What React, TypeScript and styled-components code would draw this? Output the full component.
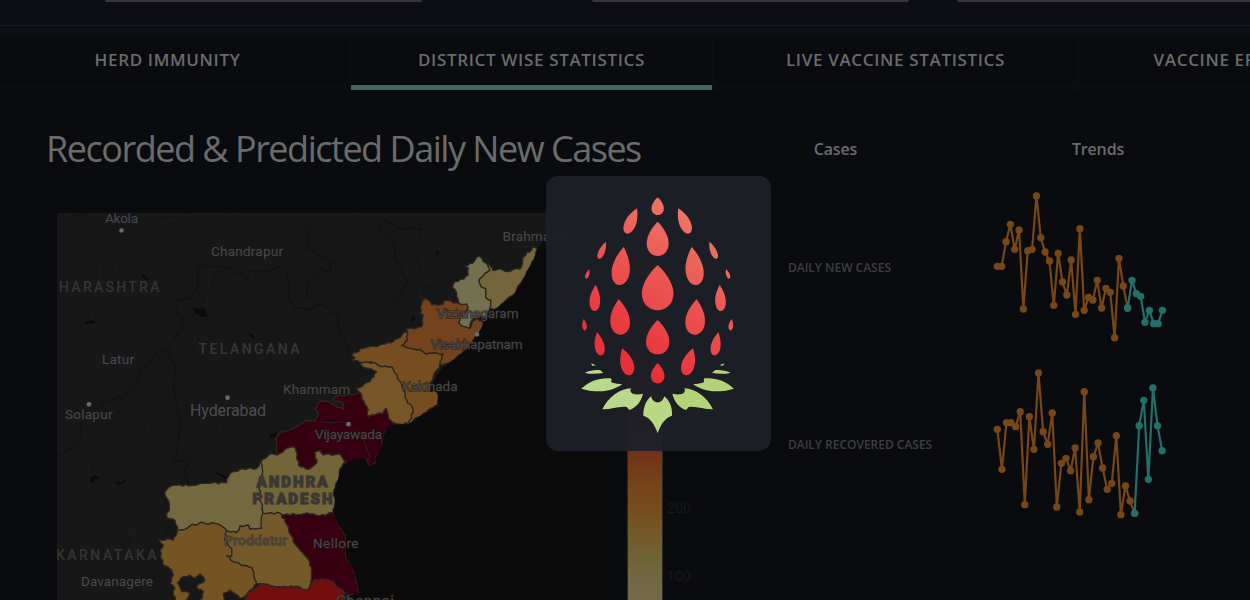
import React from "react";
import styled, { createGlobalStyle } from "styled-components";

const GlobalStyle = createGlobalStyle`
  body { margin: 0; background: #0a0b0f; overflow: hidden; }
  * { box-sizing: border-box; }
`;

const Page = styled.div`
  position: relative;
  width: 1250px;
  height: 600px;
  overflow: hidden;
  background: #0a0b0f;
  color: #6a6b6c;
  font-family: "Open Sans", "Noto Sans", sans-serif;
`;

const Header = styled.header`
  display: flex;
  height: 26px;
  padding-left: 105px;
  background: #0d0d14;
  border-bottom: 1px solid #1a1a1d;
`;

const FieldEdge = styled.div<{ $width: number; $gap: number }>`
  flex: none;
  width: ${(p) => p.$width}px;
  height: 2px;
  margin-right: ${(p) => p.$gap}px;
  background: #37373b;
  border-radius: 0 0 3px 3px;
`;

const TabBar = styled.nav`
  display: flex;
  gap: 2px;
  height: 64px;
  padding-top: 12px;
  margin-left: -14px;
  background: #0d0d14;
`;

const Tab = styled.div<{ $active?: boolean }>`
  flex: none;
  width: ${(p) => (p.$active ? 361 : 363)}px;
  height: 52px;
  padding-top: 10px;
  background: #0a0b0f;
  border-bottom: 5px solid ${(p) => (p.$active ? "#42665f" : "#0c0c14")};
  font-size: 17px;
  font-weight: 600;
  letter-spacing: 0.66px;
  line-height: 24px;
  text-align: center;
  white-space: nowrap;
`;

const Main = styled.main`
  display: flex;
  padding-left: 47px;
`;

const MapColumn = styled.section`
  flex: none;
  width: 741px;
`;

const Title = styled.h1`
  margin: 0 0 0 -1px;
  height: 123px;
  padding-top: 34px;
  font-size: 36px;
  font-weight: 400;
  line-height: 50px;
  letter-spacing: -1.48px;
  white-space: nowrap;
`;

const MapRow = styled.div`
  display: flex;
  height: 387px;
  padding-left: 10px;
`;

const MapSvg = styled.svg`
  flex: none;
  width: 549px;
  height: 387px;
  font-family: Roboto, sans-serif;
`;

const ColorScale = styled.div`
  flex: none;
  width: 36px;
  height: 387px;
  margin-left: 21px;
  border: solid #2c2a28;
  border-width: 0 1px;
  background: linear-gradient(#34000f 0, #34000f 80px, #743019 238px, #744219 268px, #75501f 303px, #715c2e 328px, #6f6335 347px, #726744 366px, #746a49 387px);
`;

const Ticks = styled.div`
  display: flex;
  flex-direction: column;
  gap: 48px;
  padding: 285px 0 0 4px;
  color: #17181b;
  font-size: 14px;
  line-height: 20px;
`;

const TrendTable = styled.section`
  flex: none;
  width: 450px;
`;

const TableHead = styled.div`
  display: flex;
  height: 89px;
  padding-top: 47px;
  font-size: 16px;
  font-weight: 600;
  letter-spacing: -0.15px;
  line-height: 24px;
`;

const HeadCell = styled.div<{ $width: number }>`
  flex: none;
  width: ${(p) => p.$width}px;
  text-align: center;
`;

const TrendRow = styled.div`
  display: flex;
  align-items: center;
  height: 177px;
`;

const TrendLabel = styled.div`
  width: 192px;
  color: #3e3e3f;
  font-size: 12px;
  font-weight: 600;
  letter-spacing: -0.01px;
  white-space: nowrap;
`;

const TrendSvg = styled.svg`
  flex: none;
  width: 200px;
  height: 177px;
`;

const LoadingCard = styled.div`
  position: absolute;
  left: 546px;
  top: 176px;
  width: 225px;
  height: 275px;
  border-radius: 12px;
  background: rgba(29, 31, 40, 0.955);
  overflow: hidden;
`;

const LogoSvg = styled.svg`
  display: block;
  width: 225px;
  height: 275px;
`;

type Point = [number, number];

const parse = (s: string, [ox, oy]: Point = [0, 0]): Point[] =>
  s.split(" ").map((p) => {
    const [x, y] = p.split(",").map(Number);
    return [x + ox, y + oy];
  });

/* Breaks a straight edge into small irregular steps, the same ones whichever way the edge is walked. */
const roughEdge = (a: Point, b: Point): Point[] => {
  const flip = a[0] > b[0] || (a[0] === b[0] && a[1] > b[1]);
  const [p, q] = flip ? [b, a] : [a, b];
  const len = Math.hypot(q[0] - p[0], q[1] - p[1]);
  const n = Math.floor(len / 8);
  const out: Point[] = [];
  for (let k = 1; k < n; k++) {
    const x = p[0] + ((q[0] - p[0]) * k) / n;
    const y = p[1] + ((q[1] - p[1]) * k) / n;
    const r = Math.sin(Math.round(x) * 12.99 + Math.round(y) * 78.2) * 2.8;
    out.push([x - ((q[1] - p[1]) / len) * r, y + ((q[0] - p[0]) / len) * r]);
  }
  return flip ? out.reverse() : out;
};

const rough = (pts: Point[], closed: boolean): string => {
  const out: Point[] = [];
  pts.forEach((p, i) => {
    out.push(p);
    if (i < pts.length - 1 || closed) out.push(...roughEdge(p, pts[(i + 1) % pts.length]));
  });
  return out.map(([x, y]) => `${x.toFixed(1)},${y.toFixed(1)}`).join(" ");
};

const districts: { at: Point; fill: string; pts: string }[] = [
  { at: [1020, 600], fill: "#754d20", pts: "35,465 70,445 110,440 160,425 200,395 203,420 185,437 210,445 240,448 258,462 280,458 310,462 300,495 280,530 270,548 270,575 285,570 295,585 293,615 250,640 207,670 220,630 200,600 185,555 165,520 155,500 130,500 100,488 35,482 45,474" },
  { at: [1020, 600], fill: "#765527", pts: "60,487 100,488 130,500 155,500 165,520 185,555 200,600 220,630 207,670 170,672 145,655 138,625 130,640 105,645 85,650 80,620 60,578 50,565 90,545 110,515 90,505 65,498" },
  { at: [1020, 600], fill: "#74431d", pts: "255,296 265,300 275,315 300,315 310,312 312,302 350,308 380,312 385,325 360,350 357,370 375,380 390,385 397,365 410,355 430,365 425,385 410,403 400,425 378,450 350,472 320,490 300,495 310,462 280,458 258,462 240,448 210,445 185,437 203,420 200,385 215,385 245,380 250,345 240,340 245,312" },
  { at: [1020, 600], fill: "#73704f", pts: "417,168 430,185 440,190 450,210 430,228 418,238 425,262 437,265 437,292 452,300 450,325 440,350 415,350 395,360 390,385 375,380 357,370 360,350 385,325 380,312 360,312 350,290 350,278 338,262 345,245 372,237 385,225 385,205 375,198 398,190 405,180" },
  { at: [1020, 600], fill: "#74653d", pts: "445,188 460,212 485,208 500,215 520,208 540,207 548,180 560,158 575,150 580,138 592,148 582,180 560,215 545,245 520,285 490,308 465,328 450,325 452,300 437,292 437,265 425,262 418,238 430,228 450,210" },
  { at: [780, 1140], fill: "#360010", pts: "300,38 320,80 325,110 345,105 370,100 378,85 385,115 410,132 380,150 370,175 365,210 345,235 350,250 325,258 318,235 290,240 260,250 255,245 240,222 190,225 180,212 165,215 170,250 145,268 115,255 108,215 100,200 80,205 52,225 47,175 60,158 100,145 135,122 165,125 175,105 165,85 180,65 200,65 215,72 250,88 250,70 218,60 225,50 260,45" },
  { at: [780, 1140], fill: "#746539", pts: "5,240 30,222 52,225 80,205 100,200 108,215 115,255 145,268 170,250 165,215 180,212 190,225 240,222 255,245 238,275 235,300 222,330 225,365 220,398 180,408 150,402 65,405 60,400 8,400 8,395 0,360 -2,295 8,275" },
  { at: [120, 1200], fill: "#746840", pts: "375,275 395,257 470,255 510,250 560,248 570,220 600,208 650,205 665,180 668,215 658,235 660,300 668,335 665,385 630,388 625,375 600,378 590,398 560,392 540,375 490,368 450,378 430,390 412,390 405,362 380,350 388,320" },
  { at: [120, 1200], fill: "#755424", pts: "355,418 400,420 412,390 430,390 450,378 490,368 540,375 560,392 555,420 575,445 575,470 560,468 580,485 635,502 642,525 650,550 625,575 610,592 600,595 570,570 550,580 555,610 480,610 490,575 470,560 495,540 480,522 465,535 450,525 430,530 412,548 425,575 450,580 430,610 410,610 400,585 405,565 390,550 400,525 395,510 368,490 360,450 370,435" },
  { at: [120, 1200], fill: "#745a2b", pts: "665,385 668,340 720,340 725,345 745,380 760,425 810,485 815,537 805,568 760,560 720,560 660,552 650,550 642,525 635,502 580,485 560,468 575,470 575,445 555,420 560,392 590,398 600,378 625,375 630,388" },
  { at: [780, 1140], fill: "#360010", pts: "65,405 150,402 180,408 220,398 232,430 258,465 258,530 285,580 298,642 270,645 240,625 220,605 200,598 165,598 145,628 155,597 150,545 100,485 85,440" },
  { at: [780, 1140], fill: "#720e0d", pts: "-55,670 -30,635 0,612 60,620 100,620 145,628 165,598 200,598 220,605 240,625 255,640 250,670" },
];

const roads = [
  "M171 705 Q260 690 330 720 T470 690 T660 640", "M171 800 L230 770 L310 790 L440 690 L520 655",
  "M250 640 C230 720 310 760 300 830 S270 900 280 980", "M310 640 L300 720 L350 790 L330 900",
  "M390 680 L500 770", "M171 860 L250 900 L350 920 L440 925 L540 915", "M456 850 C455 960 430 1020 350 1180",
  "M456 930 L500 1010 L560 1070 L660 1160", "M171 1000 L260 970 L330 1000 L456 940", "M171 1040 L280 1050 L380 1025 L500 1060",
  "M530 850 C510 740 560 690 640 700 L700 640", "M640 640 L660 740 L630 800 L620 920 L700 950 L840 920",
  "M540 1010 L640 960 L720 920 L910 920 L970 880 L1080 770", "M685 1187 L760 1090 L940 1000 L980 910",
  "M685 1187 L600 1080 L580 1000", "M685 1187 L560 1300 L500 1370 L360 1260 L250 1110", "M685 1187 L850 1170 L960 1110",
  "M171 1390 L250 1355 L380 1310 L440 1240 L520 1130", "M262 1355 L330 1440 L370 1520 L410 1630",
  "M262 1355 L270 1470 L240 1600 L190 1640", "M171 1620 L230 1600 L390 1585 L490 1605",
  "M440 1240 L450 1350 L400 1450 L450 1510 L490 1605", "M685 1187 L655 1300 L620 1340 L650 1420 L690 1440",
  "M790 1190 L900 1270 L960 1250 L1020 1190", "M1020 855 L1140 850 L1220 815 L1330 740 L1440 660",
  "M1080 640 L1110 710 L1200 810 L1270 845 L1340 840", "M1270 845 L1240 930 L1180 1000", "M1250 640 C1290 700 1260 780 1275 845",
  "M400 1585 L410 1700 L440 1800", "M171 1740 L250 1700 L330 1740 L470 1720", "M1340 840 L1420 790 L1530 760 L1650 710",
  "M560 1300 L640 1300 L720 1320 L800 1270",
];

const borders = [
  "220,640 225,648 250,648 265,640",
  "590,790 630,800 690,800 700,815 735,825 740,835 750,815 810,815 840,800 865,825 865,880 880,920 930,930 960,910 1010,945 1020,1000 1050,1060",
  "590,790 595,850 570,900 575,895 530,900 530,940 555,970 525,1010 500,1055 470,1050 450,1090 420,1110 410,1160 370,1190",
  "500,1055 525,1100 520,1150 525,1200 540,1270 530,1360 520,1380 565,1385 555,1420 565,1450",
  "905,680 925,690 920,745 970,770 1000,785 990,815 960,805 930,840 920,880 930,900",
  "1140,670 1150,700 1180,730 1190,780 1220,840 1200,890 1185,905",
  "1140,670 1160,660 1200,690 1240,685 1265,690 1260,660", "370,1190 320,1200 280,1240 245,1270 240,1330 200,1350 171,1370",
];

const places: { t: string; x: number; y: number; w: number; s?: number; c?: string; b?: boolean; halo?: string }[] = [
  { t: "Akola", x: 105, y: 223, w: 33 },
  { t: "Chandrapur", x: 211, y: 255.5, w: 72 },
  { t: "HARASHTRA", x: 59, y: 292, w: 100.5, s: 14, c: "#343434" },
  { t: "TELANGANA", x: 198.5, y: 354, w: 101, s: 14, c: "#363636" },
  { t: "Latur", x: 102, y: 363.5, w: 32 },
  { t: "Khammam", x: 283, y: 393.5, w: 67 },
  { t: "Hyderabad", x: 190, y: 415.5, w: 76, s: 16, c: "#4d4d4d" },
  { t: "Solapur", x: 65, y: 418.5, w: 47.5 },
  { t: "KARNATAKA", x: 56, y: 559.5, w: 100.5, s: 14, c: "#343434" },
  { t: "Davanagere", x: 81, y: 585.5, w: 72 },
  { t: "Brahmapur", x: 502.5, y: 241, w: 68 },
  { t: "Vizianagaram", x: 436.5, y: 317.5, w: 82 },
  { t: "Visakhapatnam", x: 430.5, y: 349, w: 92 },
  { t: "Kakinada", x: 402, y: 390.5, w: 55.5 },
  { t: "Vijayawada", x: 315, y: 438.5, w: 67 },
  { t: "ANDHRA", x: 256.5, y: 486.5, w: 71, s: 15, c: "#383838", b: true, halo: "#302e28" },
  { t: "PRADESH", x: 252.5, y: 504, w: 80, s: 15, c: "#383838", b: true, halo: "#302e28" },
  { t: "Proddatur", x: 224, y: 544.5, w: 63, halo: "#302e28" },
  { t: "Nellore", x: 313, y: 548, w: 45.5 },
  { t: "Chennai", x: 336, y: 606, w: 58, s: 15 },
];

const cities: Point[] = [[121.5, 230.5], [227.5, 397.7], [89, 404.3], [477, 334.3], [348.5, 424.2]];

/* The drawing is in thirds of a pixel. */
const DistrictMap = () => (
  <MapSvg viewBox="171 639 1647 1161">
    <rect x="171" y="639" width="1647" height="1161" fill="#171717" />
    <g fill="none" stroke="#1c1c1c" strokeWidth="3">
      {roads.map((d) => <path key={d} d={d} />)}
    </g>
    <g fill="none" stroke="#101010" strokeWidth="3">
      {borders.map((b) => <polyline key={b} points={rough(parse(b), false)} />)}
    </g>
    <g fill="#0b0b0b">
      <path d="M571 952 L585 940 L577 922 L600 926 L610 922 L621 938 L619 950 L605 951 L592 941Z" />
      <path d="M227 835 L226 830 L250 824 L258 827 L255 834Z" transform="translate(28 137)" />
      <path d="M425 832 L432 822 L437 832 L450 836 L440 840Z M337 853 L349 846 L350 858Z M745 1003 L755 1002 L766 1014 L758 1014Z" />
      <path d="M268 1434 L284 1426 L300 1433 L285 1438 L280 1450 L272 1445Z M342 1446 L362 1448 L378 1437 L372 1450 L354 1456Z" />
      <path d="M635 1412 L682 1430 L680 1440 L655 1425Z M805 1304 L830 1296 L830 1308 L815 1314Z M1308 755 L1317 752 L1314 775Z M1234 952 L1245 945 L1243 961 L1234 966Z" />
    </g>
    {districts.map((d, i) => (
      <polygon key={i} points={rough(parse(d.pts, d.at), true)} fill={d.fill} stroke="#2b2720" strokeWidth="4" strokeLinejoin="round" />
    ))}
    <path
      fill="#0b0b0b"
      d="M1680 660 L1638 715 L1612 748 L1600 780 L1580 815 L1566 846 L1540 885 L1510 908 L1485 928 L1450 965 L1445 985 L1430 1005 L1398 1050 L1370 1072 L1325 1107 L1300 1145 L1290 1175 L1305 1170 L1315 1185 L1313 1215 L1270 1242 L1227 1272 L1180 1274 Q1152 1285 1150 1315 Q1148 1350 1125 1375 L1130 1390 L1105 1398 L1096 1375 Q1060 1375 1040 1390 Q1018 1405 1017 1430 L1002 1470 L1005 1505 L999 1537 L1012 1570 L1038 1605 L1038 1670 L1065 1720 L1078 1780 L1050 1785 L1060 1800 L1818 1800 L1818 660Z"
    />
    <path d="M958 1262 L970 1268 L1035 1266 L1070 1300 L1090 1320 L1108 1365 L1106 1392" fill="none" stroke="#242024" strokeWidth="3" />
    <g fill="#6a6a6a">
      {cities.map(([x, y]) => <circle key={x} cx={x * 3} cy={y * 3} r="7" />)}
    </g>
    {places.map((p) => (
      <text
        key={p.t}
        x={p.x * 3}
        y={p.y * 3}
        textLength={p.w * 3}
        fontSize={(p.s ?? 13.5) * 3}
        fontWeight={p.b ? 900 : p.s === 14 ? 500 : 400}
        fill={p.c ?? "#494949"}
        stroke={p.halo ?? "#1a1a1a"}
        strokeOpacity="0.7"
        strokeWidth="4"
        paintOrder="stroke"
      >
        {p.t}
      </text>
    ))}
  </MapSvg>
);

const newCases = [259, 259, 185, 133, 208, 150, 387, 212, 208, 48, 173, 216, 243, 376, 220, 306, 345, 240, 403, 146, 391, 352, 360, 301, 384, 325, 337, 473, 235, 318, 384];
const newCasesAhead = [384, 301, 341, 349, 427, 391, 431, 431, 391];
const recovered = [208, 328, 188, 188, 200, 155, 434, 170, 268, 39, 215, 253, 159, 441, 310, 295, 332, 264, 456, 95, 419, 290, 249, 324, 388, 370, 227, 464, 378, 423, 460];
const recoveredAhead = [460, 197, 121, 358, 84, 197, 272];

const Series = ({ values, start, step, color }: { values: number[]; start: number; step: number; color: string }) => {
  const pts = values.map((y, i): Point => [start + i * step, y]);
  return (
    <g>
      <polyline points={pts.map((p) => p.join(",")).join(" ")} fill="none" stroke={color} strokeWidth="6.5" strokeLinejoin="round" />
      {pts.map(([x, y]) => <circle key={x} cx={x} cy={y} r="11" fill={color} />)}
    </g>
  );
};

const Trend = ({ past, ahead, step, top }: { past: number[]; ahead: number[]; step: number; top: number }) => (
  <TrendSvg viewBox={`0 ${top} 600 531`}>
    <Series values={past} start={52} step={step} color="#784717" />
    <Series values={ahead} start={52 + (past.length - 1) * step} step={step} color="#23706a" />
  </TrendSvg>
);

/* Seed: tip x, tip y, bottom x, bottom y, width */
type Seed = [number, number, number, number, number];

const centreSeeds: Seed[] = [
  [353, 82, 353, 135, 37], [353, 155, 353, 258, 66], [353, 285, 353, 421, 95], [353, 450, 353, 553, 70], [353, 580, 353, 640, 41],
];
const sideSeeds: Seed[] = [
  [291, 115, 258, 190, 34], [198, 215, 176, 266, 19], [148, 298, 138, 326, 11], [251, 231, 237, 345, 54], [167, 345, 163, 423, 32],
  [236, 388, 243, 494, 59], [131, 447, 135, 481, 14], [171, 487, 184, 556, 29], [247, 535, 271, 615, 39],
];
const seeds: Seed[] = [
  ...centreSeeds,
  ...sideSeeds,
  ...sideSeeds.map(([a, b, c, d, w]): Seed => [706 - a, b, 706 - c, d, w]),
];

/* Wide rounded bulb, sides bowing out all the way up to the tip. */
const seedPath = ([tx, ty, bx, by, w]: Seed) => {
  const dx = bx - tx;
  const dy = by - ty;
  const len = Math.hypot(dx, dy);
  const at = (along: number, side: number) =>
    `${(tx + dx * along - (dy / len) * w * side).toFixed(1)} ${(ty + dy * along + (dx / len) * w * side).toFixed(1)}`;
  return `M${at(0, 0)} C${at(0.13, 0.2)} ${at(0.38, 0.5)} ${at(0.63, 0.5)} C${at(0.85, 0.5)} ${at(1, 0.28)} ${at(1, 0)} C${at(1, -0.28)} ${at(0.85, -0.5)} ${at(0.63, -0.5)} C${at(0.38, -0.5)} ${at(0.13, -0.2)} ${at(0, 0)}Z`;
};

const sideLeaves =
  "M187 298 C205 260 240 237 273 235 C266 250 282 257 309 251 C303 275 290 292 268 300 L260 291 C235 288 212 299 187 298Z M124 236 C150 212 180 202 213 205 L215 211 C208 220 225 220 247 223 C225 237 205 244 180 244 C155 244 140 241 124 236Z M134 188 C150 181 165 180 180 180 L190 189 C170 192 150 193 134 188Z M153 160 L168 166 L157 167Z";

const Logo = () => (
  <LogoSvg viewBox="18 18 675 825">
    <defs>
      <linearGradient id="seed" gradientUnits="userSpaceOnUse" x1="470" y1="110" x2="210" y2="530">
        <stop offset="0" stopColor="#ee7a69" />
        <stop offset="1" stopColor="#e83039" />
      </linearGradient>
    </defs>
    <g fill="url(#seed)">
      {seeds.map((s) => <path key={s.join()} d={seedPath(s)} />)}
    </g>
    <g transform="translate(0 420)">
      <path fill="#b8d883" d="M353 370 C345 345 330 322 310 317 C310 295 315 275 333 259 C340 284 366 284 373 259 C392 275 397 295 396 317 C376 322 361 345 353 370Z" />
      <path fill="#bbd98d" d={sideLeaves} />
      <path fill="#b3d377" d={sideLeaves} transform="translate(706 0) scale(-1 1)" />
    </g>
  </LogoSvg>
);

export default function App() {
  return (
    <Page>
      <GlobalStyle />
      <Header>
        <FieldEdge $width={317} $gap={170} />
        <FieldEdge $width={317} $gap={48} />
        <FieldEdge $width={317} $gap={0} />
      </Header>
      <TabBar>
        <Tab>HERD IMMUNITY</Tab>
        <Tab $active>DISTRICT WISE STATISTICS</Tab>
        <Tab>LIVE VACCINE STATISTICS</Tab>
        <Tab>VACCINE EFFECTIVENESS</Tab>
      </TabBar>
      <Main>
        <MapColumn>
          <Title>Recorded &amp; Predicted Daily New Cases</Title>
          <MapRow>
            <DistrictMap />
            <ColorScale />
            <Ticks>
              <span>200</span>
              <span>100</span>
            </Ticks>
          </MapRow>
        </MapColumn>
        <TrendTable>
          <TableHead>
            <HeadCell $width={95}>Cases</HeadCell>
            <HeadCell $width={430}>Trends</HeadCell>
          </TableHead>
          <TrendRow>
            <TrendLabel>DAILY NEW CASES</TrendLabel>
            <Trend past={newCases} ahead={newCasesAhead} step={13.03} top={-3} />
          </TrendRow>
          <TrendRow>
            <TrendLabel>DAILY RECOVERED CASES</TrendLabel>
            <Trend past={recovered} ahead={recoveredAhead} step={13.73} top={-12} />
          </TrendRow>
        </TrendTable>
      </Main>
      <LoadingCard>
        <Logo />
      </LoadingCard>
    </Page>
  );
}
